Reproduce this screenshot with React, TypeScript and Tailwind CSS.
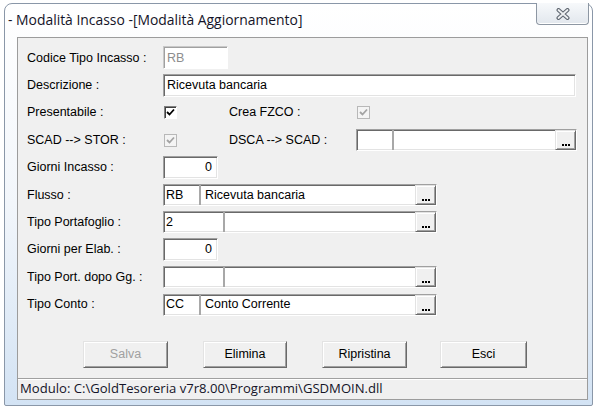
import type { ReactNode } from 'react'

const ui = { fontFamily: '"Liberation Sans", Arial, sans-serif' }
const seg = { fontFamily: '"Open Sans", "Noto Sans", sans-serif' }

const sunken =
  'border border-t-[#a0a0a0] border-l-[#a0a0a0] border-r-white border-b-white shadow-[inset_1px_1px_0_#696969,inset_-1px_-1px_0_#e3e3e3] bg-white'

const raised =
  'border border-t-[#e3e3e3] border-l-[#e3e3e3] border-r-[#696969] border-b-[#696969] shadow-[inset_1px_1px_0_#ffffff,inset_-1px_-1px_0_#a0a0a0] bg-[#f0f0f0]'

function Row({ label, children }: { label: string; children?: ReactNode }) {
  return (
    <div className="flex h-[27.4px] items-center">
      <div className="w-[136px] shrink-0 text-[12.5px] text-black">{label}</div>
      {children}
    </div>
  )
}

function TextBox({ width, value, right, muted }: { width: string; value?: string; right?: boolean; muted?: boolean }) {
  return (
    <div
      className={`${sunken} ${width} h-[23px] flex items-center text-[12.5px] ${right ? 'justify-end pr-[5px]' : 'pl-[3px]'} ${
        muted ? 'text-[#8d8d8d] border-t-[#c8c8c8] border-l-[#c8c8c8] shadow-[inset_1px_1px_0_#a0a0a0]' : 'text-black'
      }`}
    >
      {value}
    </div>
  )
}

function Dots() {
  return (
    <div className={`${raised} w-[21px] h-full flex items-end justify-center gap-[1px] pb-[3px] shrink-0`}>
      <span className="w-[2px] h-[2px] bg-black" />
      <span className="w-[2px] h-[2px] bg-black" />
      <span className="w-[2px] h-[2px] bg-black" />
    </div>
  )
}

function Lookup({ code, text, width, codeWidth }: { code?: string; text?: string; width: string; codeWidth: string }) {
  return (
    <div className={`${sunken} ${width} h-[22px] flex text-[12.5px] text-black`}>
      <div className={`${codeWidth} shrink-0 flex items-center pl-[2px]`}>{code}</div>
      <div className="flex-1 flex items-center pl-[4px] border-l-2 border-l-[#a8a8a8]">{text}</div>
      <Dots />
    </div>
  )
}

function Check({ checked, disabled }: { checked?: boolean; disabled?: boolean }) {
  return (
    <div
      className={`w-[13px] h-[13px] border flex items-center justify-center ${
        disabled
          ? 'border-[#b8b8b8] bg-[#f4f4f4]'
          : 'border-t-[#808080] border-l-[#808080] border-r-white border-b-white shadow-[inset_1px_1px_0_#404040] bg-white'
      }`}
    >
      {checked && (
        <svg width="9" height="9" viewBox="0 0 9 9">
          <path d="M1 4 L3.5 6.5 L8 1.5" fill="none" stroke={disabled ? '#a3a3a3' : '#000'} strokeWidth="1.8" />
        </svg>
      )}
    </div>
  )
}

function Btn({ label, width, disabled, className = '' }: { label: string; width: string; disabled?: boolean; className?: string }) {
  return (
    <div
      className={`${raised} ${width} h-[27px] flex items-center justify-center text-[12.5px] ${
        disabled ? 'text-[#a0a0a0]' : 'text-black'
      } ${className}`}
    >
      {label}
    </div>
  )
}

export default function App() {
  return (
    <div className="w-[600px] h-[411px] bg-white overflow-hidden pt-[3px] pl-[4px]" style={ui}>
      <div className="w-[589px] h-[403px] rounded-t-[8px] rounded-b-[2px] border border-[#8a97a8] bg-gradient-to-b from-white via-[#f2f6fb] to-[#d3e3f4] flex flex-col">
        <div className="h-[33px] shrink-0 flex items-start justify-between pl-[3px] pr-[3px]">
          <div className="mt-[6px] text-[13.9px] text-[#141428]" style={seg}>
            - Modalità Incasso -[Modalità Aggiornamento]
          </div>
          <div className="-mt-px w-[53px] h-[22px] rounded-b-[4px] border border-t-0 border-[#8d97a3] bg-gradient-to-b from-[#f7f9fb] to-[#e2e7ed] flex items-center justify-center shadow-[inset_0_-1px_0_#ffffff]">
            <svg width="16" height="12" viewBox="0 0 16 12">
              <path d="M3.5 2 L12.5 10 M12.5 2 L3.5 10" stroke="#5f6670" strokeWidth="4" strokeLinecap="round" fill="none" />
              <path d="M3.5 2 L12.5 10 M12.5 2 L3.5 10" stroke="#eef0f2" strokeWidth="1.8" strokeLinecap="round" fill="none" />
            </svg>
          </div>
        </div>

        <div className="flex-1 ml-[12px] mr-[4px] mb-[5px] border border-[#9c9c9c] bg-[#f0f0f0] flex flex-col">
          <div className="pl-[9px] pt-[6.3px]">
            <Row label="Codice Tipo Incasso :">
              <TextBox width="w-[65px]" value="RB" muted />
            </Row>
            <Row label="Descrizione :">
              <TextBox width="w-[413px]" value="Ricevuta bancaria" />
            </Row>
            <Row label="Presentabile :">
              <div className="w-[66px] pl-[1px]">
                <Check checked />
              </div>
              <div className="w-[128px] text-[12.5px]">Crea FZCO :</div>
              <Check checked disabled />
            </Row>
            <Row label="SCAD --> STOR :">
              <div className="w-[66px] pl-[1px]">
                <Check checked disabled />
              </div>
              <div className="w-[127px] text-[12.5px]">{'DSCA --> SCAD :'}</div>
              <Lookup width="w-[221px]" codeWidth="w-[35px]" />
            </Row>
            <Row label="Giorni Incasso :">
              <TextBox width="w-[55px]" value="0" right />
            </Row>
            <Row label="Flusso :">
              <Lookup width="w-[274px]" codeWidth="w-[35px]" code="RB" text="Ricevuta bancaria" />
            </Row>
            <Row label="Tipo Portafoglio :">
              <Lookup width="w-[274px]" codeWidth="w-[59px]" code="2" />
            </Row>
            <Row label="Giorni per Elab. :">
              <TextBox width="w-[55px]" value="0" right />
            </Row>
            <Row label="Tipo Port. dopo Gg. :">
              <Lookup width="w-[274px]" codeWidth="w-[59px]" />
            </Row>
            <Row label="Tipo Conto :">
              <Lookup width="w-[274px]" codeWidth="w-[35px]" code="CC" text="Conto Corrente" />
            </Row>

            <div className="flex mt-[22.7px] ml-[56px]">
              <Btn label="Salva" width="w-[85px]" disabled />
              <Btn label="Elimina" width="w-[84px]" className="ml-[35px]" />
              <Btn label="Ripristina" width="w-[85px]" className="ml-[35px]" />
              <Btn label="Esci" width="w-[87px]" className="ml-[33px]" />
            </div>
          </div>

          <div className="mt-auto h-[21px] border-t border-t-[#a0a0a0] shadow-[inset_0_1px_0_#ffffff] flex items-center pl-[2px] text-[13.1px] text-[#141428]" style={seg}>
            Modulo: C:\GoldTesoreria v7r8.00\Programmi\GSDMOIN.dll
          </div>
        </div>
      </div>
    </div>
  )
}
